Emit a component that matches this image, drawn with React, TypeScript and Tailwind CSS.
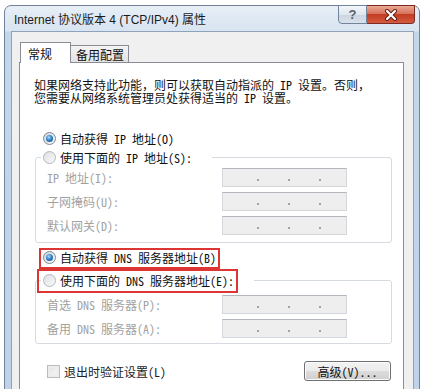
import React from "react";

const sim = "font-['Noto_Sans_Mono_CJK_SC','Noto_Sans_CJK_SC',monospace] text-[12px] leading-[13px]";

function Radio({ checked = false }: { checked?: boolean }) {
  return (
    <span
      className={
        checked
          ? "flex h-[13px] w-[13px] shrink-0 items-center justify-center rounded-full border border-[#7d8793] bg-[linear-gradient(135deg,#cfd3d8,#fbfbfb)]"
          : "flex h-[13px] w-[13px] shrink-0 items-center justify-center rounded-full border border-[#b3b8bd] bg-[linear-gradient(135deg,#dcdfe2,#fafafa)]"
      }
    >
      {checked && (
        <span className="h-[7px] w-[7px] rounded-full bg-[radial-gradient(circle_at_40%_35%,#b5e0ff_0%,#3a8ad0_40%,#0d3f74_100%)]" />
      )}
    </span>
  );
}

function IpField() {
  return (
    <div className="flex h-[19px] w-[125px] items-center gap-[29px] border border-[#d3d7dc] border-t-[#b3b7bd] bg-[#eeeeee] pl-[34px]">
      <span className="mt-[5px] h-[2px] w-[2px] bg-[#a3a3a3]" />
      <span className="mt-[5px] h-[2px] w-[2px] bg-[#a3a3a3]" />
      <span className="mt-[5px] h-[2px] w-[2px] bg-[#a3a3a3]" />
    </div>
  );
}

function FieldRow({ label }: { label: string }) {
  return (
    <div className="flex h-[19px] items-center justify-between pl-[11px] pr-[44px]">
      <span className="text-[#a2a2a2]">{label}</span>
      <IpField />
    </div>
  );
}

function Legend({ text }: { text: string }) {
  return (
    <div className="-mt-[10px] ml-[5px] flex h-[19px] w-fit items-center gap-[4px] bg-white pl-[2px] pr-[20px]">
      <Radio />
      <span className="text-[#111]">{text}</span>
    </div>
  );
}

export default function App() {
  return (
    <div className={`relative h-[389px] w-[428px] overflow-hidden bg-white ${sim}`}>
      <div className="ml-[4px] mt-[5px] h-[400px] w-[416px] rounded-t-[7px] border border-[#71839a] bg-[linear-gradient(180deg,#e7eef6_0px,#d8e4f1_25px,#c4d6ea_26px,#bfd2e8_100%)]">
        {/* title bar */}
        <div className="flex h-[25px] items-start justify-between pl-[9px] pr-[4px]">
          <span className="mt-[7px] font-['Liberation_Sans','Noto_Sans_CJK_SC',sans-serif] text-[12px] leading-[14px] text-[#1b1b1b]">
            Internet 协议版本 4 (TCP/IPv4) 属性
          </span>
          <div className="-mt-[1px] flex">
            <div className="flex h-[19px] w-[29px] items-center justify-center rounded-bl-[4px] border border-[#72849a] bg-[linear-gradient(180deg,#f4f7fa_0%,#dfe6ee_50%,#cbd5e1_51%,#d9e1ea_100%)] font-['Liberation_Sans',sans-serif] text-[13px] font-bold text-[#566270]">
              ?
            </div>
            <div className="flex h-[19px] w-[48px] items-center justify-center rounded-br-[4px] border border-l-0 border-[#7b2b21] bg-[linear-gradient(180deg,#eaa995_0%,#d8735d_45%,#c33d22_50%,#d45a3f_100%)]">
              <svg width="14" height="12" viewBox="0 0 14 12">
                <path d="M3 2 L11 10 M11 2 L3 10" stroke="#5a1c12" strokeWidth="4" strokeLinecap="round" />
                <path d="M3 2 L11 10 M11 2 L3 10" stroke="#ffffff" strokeWidth="2.2" strokeLinecap="round" />
              </svg>
            </div>
          </div>
        </div>

        {/* body */}
        <div className="ml-[6px] mr-[5px] h-[360px] border border-[#8ea3ba] bg-[#f0f0f0] pl-[7px] pt-[10px]">
          {/* tabs */}
          <div className="flex items-end pl-[1px] font-['Noto_Sans_CJK_SC',sans-serif] text-[12px] text-[#111]">
            <div className="relative z-10 -mb-[1px] flex h-[21px] w-[51px] items-center border border-b-0 border-[#898c95] bg-white pl-[7px]">
              常规
            </div>
            <div className="flex h-[17px] w-[58px] items-center border border-b-0 border-l-0 border-[#898c95] bg-[linear-gradient(180deg,#f4f4f4,#e2e2e2)] pl-[5px]">
              备用配置
            </div>
          </div>

          {/* panel */}
          <div className="relative h-[340px] w-[385px] border border-[#898c95] bg-white text-[#111]">
            <p className="mt-[15px] pl-[14px]">
              如果网络支持此功能，则可以获取自动指派的 IP 设置。否则，
              <br />
              您需要从网络系统管理员处获得适当的 IP 设置。
            </p>

            <div className="mt-[25px] flex h-[19px] items-center gap-[4px] pl-[23px]">
              <Radio checked />
              <span>自动获得 IP 地址(O)</span>
            </div>

            <div className="ml-[15px] mr-[11px] mt-[9px] rounded-[3px] border border-[#d5dbe1] pb-[7px]">
              <Legend text="使用下面的 IP 地址(S):" />
              <div className="mt-[1px] flex flex-col gap-[5px]">
                <FieldRow label="IP 地址(I):" />
                <FieldRow label="子网掩码(U):" />
                <FieldRow label="默认网关(D):" />
              </div>
            </div>

            <div className="mt-[5px] flex h-[19px] items-center gap-[4px] pl-[23px]">
              <Radio checked />
              <span>自动获得 DNS 服务器地址(B)</span>
            </div>

            <div className="ml-[15px] mr-[11px] mt-[13px] rounded-[3px] border border-[#d5dbe1] pb-[5px]">
              <Legend text="使用下面的 DNS 服务器地址(E):" />
              <div className="mt-[5px] flex flex-col gap-[5px]">
                <FieldRow label="首选 DNS 服务器(P):" />
                <FieldRow label="备用 DNS 服务器(A):" />
              </div>
            </div>

            <div className="mt-[17px] flex h-[20px] items-center justify-between pl-[27px] pr-[12px]">
              <div className="flex items-center gap-[4px]">
                <span className="h-[13px] w-[13px] border border-[#bcbcbc] bg-[linear-gradient(135deg,#e2e2e2,#f8f8f8)] shadow-[inset_0_0_0_2px_#ececec]" />
                <span className="text-[#222]">退出时验证设置(L)</span>
              </div>
              <div className="flex h-[20px] w-[87px] items-center justify-center rounded-[3px] border border-[#707070] bg-[linear-gradient(180deg,#f3f3f3_0%,#ebebeb_50%,#dddddd_51%,#cfcfcf_100%)] shadow-[inset_0_0_0_1px_#fbfbfb]">
                高级(V)...
              </div>
            </div>

            {/* red annotation boxes */}
            <div className="pointer-events-none absolute left-[19px] top-[185px] h-[21px] w-[181px] border-2 border-[#dd3434]" />
            <div className="pointer-events-none absolute left-[17px] top-[206px] h-[24px] w-[201px] border-2 border-[#dd3434]" />
          </div>
        </div>
      </div>
    </div>
  );
}
